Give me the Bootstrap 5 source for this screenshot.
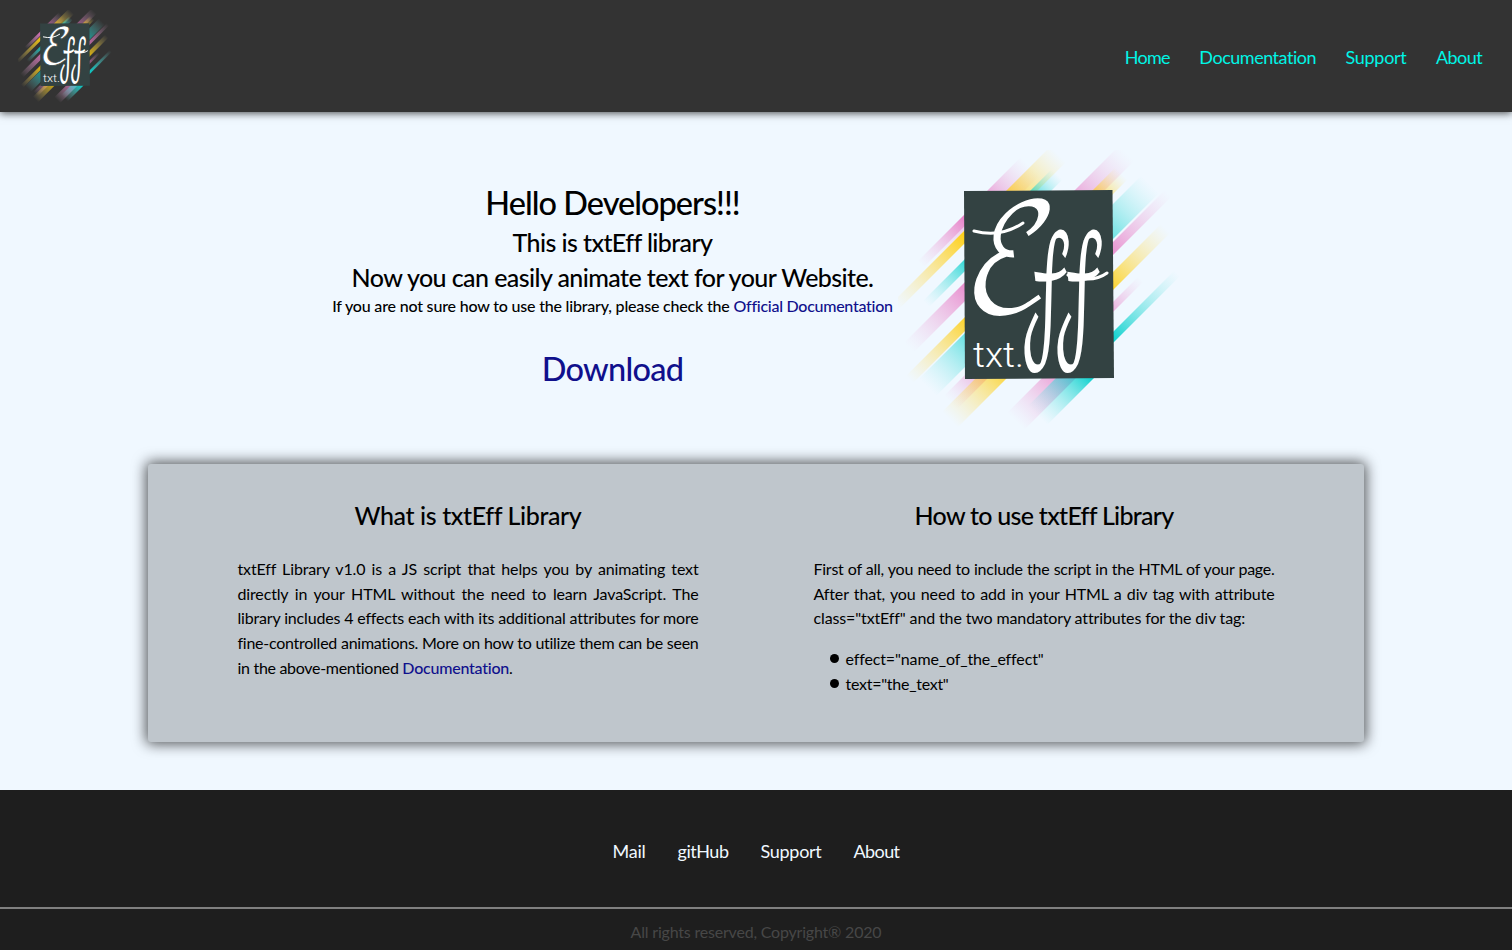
<!DOCTYPE html>
<html lang="en">
<head>
<meta charset="utf-8">
<meta name="viewport" content="width=device-width, initial-scale=1">
<title>txtEff Library</title>
<link href="https://cdn.jsdelivr.net/npm/bootstrap@5.3.0/dist/css/bootstrap.min.css" rel="stylesheet">
<style>
body{font-family:Lato,"Open Sans",sans-serif;background:#f0f8ff;color:#000;line-height:24.7px;overflow:hidden}
a{text-decoration:none;color:#10108c}
.topbar{height:112px;background:#333;box-shadow:0 1px 8px #000b;padding:0 30px 0 18px}
.topbar .nav-link,.foot .nav-link{padding:0;font-size:18px;line-height:28px;white-space:nowrap}
.topbar .nav-link{color:#00f5e6}
.links-top{gap:29.5px;margin-top:2px}
.mark-s{width:94px;height:93px}
.hero{height:352px;gap:5px}
.hero-copy{width:561px;padding-top:71px;white-space:nowrap}
.t-xl{font-size:32.5px;line-height:40px;font-weight:500}
.t-lg{font-size:25px;line-height:35px;font-weight:500}
.hero-sub{padding-top:2px}
.hero-note{line-height:24px;font-weight:500;margin-top:-1px}
.hero-get{margin-top:31px}
.mark-l{width:282px;height:280px;margin-top:38px}
.panel{width:1216px;height:278px;background:#bfc6cc;border-radius:3px;box-shadow:0 0 14px 2px #000a;padding:34px 89.5px 0;column-gap:115px;display:grid;grid-template-columns:461px 461px;white-space:nowrap}
.panel .t-lg{margin-bottom:24px}
.ln{display:block;text-align:justify;text-align-last:justify}
.ln-start{display:block}
.attrs{list-style:none;margin:16px 0 0;padding-left:16px}
.attrs li{display:flex;align-items:center}
.attrs li::before{content:"";width:9px;height:9px;border-radius:50%;background:#000;margin:-2px 7px 0 0}
.foot{height:160px;margin-top:48px;background:#1e1e1e}
.foot .nav-link{color:#f0f8ff}
.links-foot{gap:32px;height:117px;padding-top:5px}
.copy{border-top:2px solid #808080;color:#474747;padding-top:11px;letter-spacing:-.2px}
</style>
</head>
<body>
<svg width="0" height="0" class="position-absolute" aria-hidden="true">
<defs>
<linearGradient id="pr"><stop stop-color="#e66fc0"/><stop offset="1" stop-color="#efb9e0" stop-opacity="0"/></linearGradient>
<linearGradient id="yr"><stop stop-color="#ffcb00"/><stop offset="1" stop-color="#ffe27a" stop-opacity="0"/></linearGradient>
<linearGradient id="cr"><stop stop-color="#00cfcb"/><stop offset="1" stop-color="#86e8e8" stop-opacity="0"/></linearGradient>
<linearGradient id="pl" x1="1" x2="0"><stop stop-color="#e66fc0"/><stop offset="1" stop-color="#efb9e0" stop-opacity="0"/></linearGradient>
<linearGradient id="yl" x1="1" x2="0"><stop stop-color="#ffcb00"/><stop offset="1" stop-color="#ffe27a" stop-opacity="0"/></linearGradient>
<linearGradient id="cl" x1="1" x2="0"><stop stop-color="#00cfcb"/><stop offset="1" stop-color="#86e8e8" stop-opacity="0"/></linearGradient>
<symbol id="logo" viewBox="0 0 282 280">
<!-- diagonal streaks: x runs up-right, y runs down-right -->
<g transform="matrix(.5 -.5 .5 .5 0 0)">
<rect x="45" y="130" width="71" height="37" fill="url(#pr)" opacity=".6"/>
<rect x="60" y="149" width="96" height="31" fill="url(#yr)" opacity=".75"/>
<rect x="85" y="173" width="50" height="21" fill="url(#cr)" opacity=".8"/>
<rect x="130" y="217" width="95" height="30" fill="url(#pr)" opacity=".6"/>
<rect x="150" y="235" width="50" height="24" fill="url(#yr)" opacity=".7"/>
<rect x="115" y="269" width="103" height="35" fill="url(#cr)" opacity=".65"/>
<rect x="105" y="307" width="122" height="13" fill="url(#pr)" opacity=".8"/>
<rect x="72" y="337" width="117" height="18" fill="url(#yr)" opacity=".85"/>
<rect x="48" y="367" width="66" height="10" fill="url(#pr)" opacity=".6"/>
<rect x="20" y="397" width="136" height="11" fill="url(#cr)"/>
<rect x="-92" y="131" width="100" height="12" fill="url(#pl)"/>
<rect x="-70" y="143" width="66" height="4" fill="url(#pl)" opacity=".4"/>
<rect x="-158" y="147" width="150" height="13" fill="url(#yl)"/>
<rect x="-126" y="176" width="90" height="12" fill="url(#cl)" opacity=".9"/>
<rect x="-187" y="199" width="127" height="19" fill="url(#pl)" opacity=".85"/>
<rect x="-218" y="234" width="123" height="14" fill="url(#yl)" opacity=".9"/>
<rect x="-208" y="250" width="98" height="34" fill="url(#cl)" opacity=".65"/>
<rect x="-200" y="292" width="64" height="26" fill="url(#pl)" opacity=".6"/>
<rect x="-218" y="306" width="101" height="31" fill="url(#yl)" opacity=".75"/>
<rect x="-154" y="372" width="106" height="34" fill="url(#pl)" opacity=".85"/>
<rect x="-126" y="386" width="96" height="38" fill="url(#cl)"/>
</g>
<polygon points="66,41 214.500,40 216,228 67,229" fill="#334242"/>
<g fill="#fff" font-family="'DejaVu Math TeX Gyre','DejaVu Serif',serif" font-size="150">
<text transform="matrix(.88 0 -.12 1 62 162)" stroke="#334242" stroke-width="2">ℰ</text>
<text transform="matrix(.44 0 .06 .88 120 184)">𝒻</text>
<text transform="matrix(.44 0 .06 .88 153 184)">𝒻</text>
</g>
<path d="M76 81Q103 88 125 73M170 125Q194 134 209 123" fill="none" stroke="#fff" stroke-width="3" stroke-linecap="round"/>
<text x="75" y="217" font-family="Roboto,sans-serif" font-weight="300" font-size="35" fill="#fff" textLength="51" lengthAdjust="spacingAndGlyphs">txt.</text>
</symbol>
</defs>
</svg>
<nav class="topbar d-flex align-items-center justify-content-between position-relative">
<a href="#" aria-label="Logo" class="d-flex"><svg class="mark-s"><use href="#logo"/></svg></a>
<div class="nav links-top">
<a class="nav-link" style="letter-spacing:-.75px" href="#">Home</a>
<a class="nav-link" style="letter-spacing:-.48px" href="#">Documentation</a>
<a class="nav-link" style="letter-spacing:-.29px" href="#">Support</a>
<a class="nav-link" style="letter-spacing:-.59px" href="#">About</a>
</div>
</nav>
<main>
<section class="hero d-flex justify-content-center">
<div class="hero-copy text-center">
<h1 class="t-xl m-0" style="letter-spacing:-.98px">Hello Developers!!!</h1>
<h2 class="t-lg m-0 hero-sub" style="letter-spacing:-.59px">This is txtEff library</h2>
<h2 class="t-lg m-0" style="letter-spacing:-.58px">Now you can easily animate text for your Website.</h2>
<p class="hero-note mb-0"><span style="letter-spacing:-.19px">If you are not sure how to use the library, please check the</span> <a style="letter-spacing:-.27px" href="#">Official Documentation</a></p>
<a class="t-xl d-block hero-get" style="letter-spacing:-.75px" href="#">Download</a>
</div>
<svg class="mark-l"><use href="#logo"/></svg>
</section>
<section class="panel mx-auto">
<article>
<h3 class="t-lg text-center" style="letter-spacing:-.39px">What is txtEff Library</h3>
<p class="m-0">
<span class="ln" style="letter-spacing:-.15px">txtEff Library v1.0 is a JS script that helps you by animating text</span>
<span class="ln" style="letter-spacing:-.15px">directly in your HTML without the need to learn JavaScript. The</span>
<span class="ln" style="letter-spacing:-.17px">library includes 4 effects each with its additional attributes for more</span>
<span class="ln" style="letter-spacing:-.26px">fine-controlled animations. More on how to utilize them can be seen</span>
<span class="ln-start" style="letter-spacing:-.3px">in the above-mentioned <a style="letter-spacing:-.23px;font-weight:500" href="#">Documentation</a>.</span>
</p>
</article>
<article>
<h3 class="t-lg text-center" style="letter-spacing:-.72px">How to use txtEff Library</h3>
<p class="m-0">
<span class="ln" style="letter-spacing:-.25px">First of all, you need to include the script in the HTML of your page.</span>
<span class="ln" style="letter-spacing:-.15px">After that, you need to add in your HTML a div tag with attribute</span>
<span class="ln-start" style="letter-spacing:-.13px">class="txtEff" and the two mandatory attributes for the div tag:</span>
</p>
<ul class="attrs">
<li style="letter-spacing:-.13px">effect="name_of_the_effect"</li>
<li style="letter-spacing:-.27px">text="the_text"</li>
</ul>
</article>
</section>
</main>
<footer class="foot">
<div class="nav links-foot justify-content-center align-items-center">
<a class="nav-link" style="letter-spacing:-.24px" href="#">Mail</a>
<a class="nav-link" style="letter-spacing:-.47px" href="#">gitHub</a>
<a class="nav-link" style="letter-spacing:-.29px" href="#">Support</a>
<a class="nav-link" style="letter-spacing:-.59px" href="#">About</a>
</div>
<div class="copy text-center">All rights reserved, Copyright® 2020</div>
</footer>
<script src="https://cdn.jsdelivr.net/npm/bootstrap@5.3.0/dist/js/bootstrap.bundle.min.js"></script>
</body>
</html>
